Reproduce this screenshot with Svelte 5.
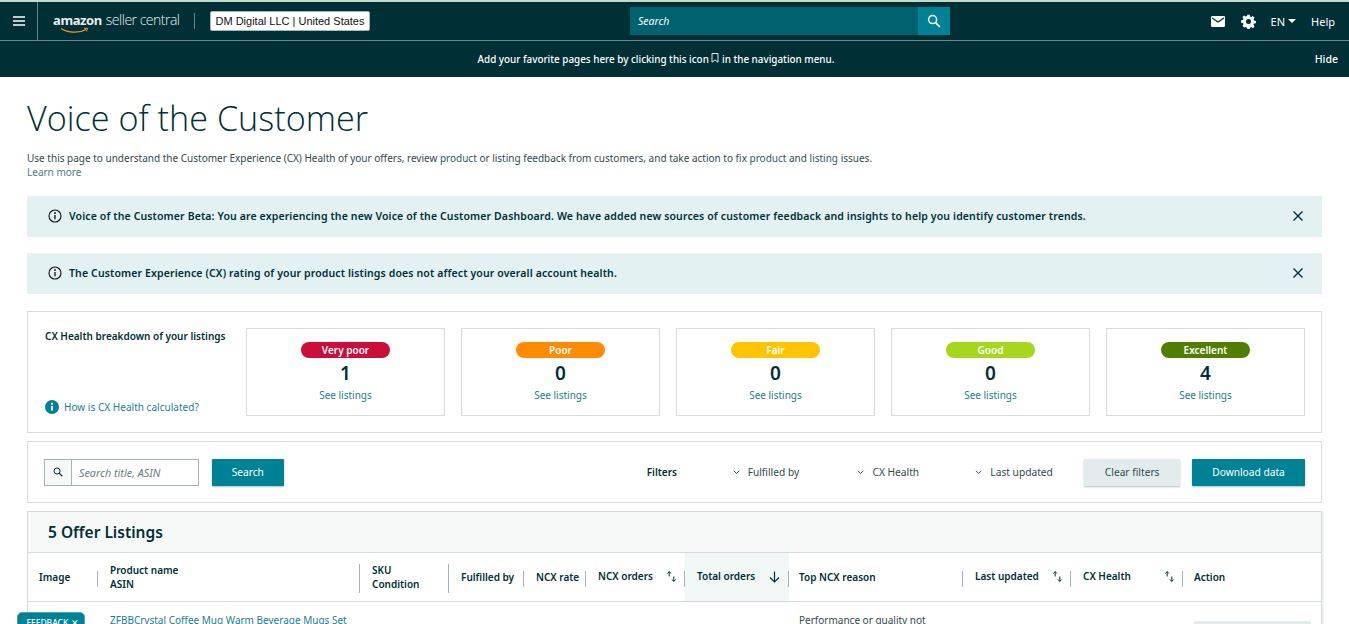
<script>
  const ratings = [
    { label: 'Very poor', count: 1, color: '#cc0c39' },
    { label: 'Poor', count: 0, color: '#ff8c00' },
    { label: 'Fair', count: 0, color: '#ffc400' },
    { label: 'Good', count: 0, color: '#a6d71c' },
    { label: 'Excellent', count: 4, color: '#507f00' }
  ];
  const filters = ['Fulfilled by', 'CX Health', 'Last updated'];
  const alerts = [
    'Voice of the Customer Beta: You are experiencing the new Voice of the Customer Dashboard. We have added new sources of customer feedback and insights to help you identify customer trends.',
    'The Customer Experience (CX) rating of your product listings does not affect your overall account health.'
  ];
  const columns = [
    { lines: ['Image'] },
    { lines: ['Product name', 'ASIN'] },
    { lines: ['SKU', 'Condition'] },
    { lines: ['Fulfilled by'] },
    { lines: ['NCX rate'] },
    { lines: ['NCX orders'], sort: true },
    { lines: ['Total orders'], sorted: true },
    { lines: ['Top NCX reason'] },
    { lines: ['Last updated'], sort: true },
    { lines: ['CX Health'], sort: true },
    { lines: ['Action'] }
  ];
</script>

<div class="page">
  <header class="topbar">
    <div class="nav">
      <button class="menu" aria-label="Menu">
        <svg width="14" height="12" viewBox="0 0 14 12"><path d="M1 2h12M1 6h12M1 10h12" stroke="#fff" stroke-width="1.5" /></svg>
      </button>
      <div class="logo">
        <span class="logo-a">amazon</span><span class="logo-b">seller central</span>
        <svg class="smile" width="30" height="7" viewBox="0 0 30 7"><path d="M1 1.5C8 6 19 6.5 26 2.5" fill="none" stroke="#f29a2e" stroke-width="1.3" /><path d="M24 1.5l3.5-.3-1 3.2" fill="none" stroke="#f29a2e" stroke-width="1" /></svg>
      </div>
      <span class="logo-sep"></span>
      <span class="account">DM Digital LLC | United States</span>
      <div class="search">
        <span class="search-text">Search</span>
        <span class="search-btn">
          <svg width="14" height="14" viewBox="0 0 14 14"><circle cx="5.6" cy="5.6" r="4" fill="none" stroke="#fff" stroke-width="1.5" /><path d="M8.6 8.6l4.200 4.200" stroke="#fff" stroke-width="1.800" /></svg>
        </span>
      </div>
      <div class="nav-right">
        <svg class="mail" width="14" height="11" viewBox="0 0 14 11"><rect width="14" height="11" rx="1.200" fill="#fff" /><path d="M1 2l6 4 6-4" fill="none" stroke="#002f36" stroke-width="1.300" /></svg>
        <svg width="15" height="15" viewBox="0 0 24 24"><path fill="#fff" fill-rule="evenodd" d="M13.900 1l.5 3 2 .9 2.600-1.700 2.700 2.700-1.700 2.600.9 2 3 .5v3.800l-3 .5-.9 2 1.700 2.600-2.700 2.700-2.600-1.700-2 .9-.5 3h-3.800l-.5-3-2-.9L5 21.600l-2.700-2.700L4 16.300l-.9-2-3-.5V10l3-.5.9-2L2.300 4.900 5 2.200l2.600 1.700 2-.9.5-2h3.800zM12 8a4 4 0 1 0 0 8 4 4 0 0 0 0-8z" /></svg>
        <span class="lang">EN<i class="caret"></i></span>
        <span>Help</span>
      </div>
    </div>
    <div class="notice">
      <span class="notice-text">Add your favorite pages here by clicking this icon
        <svg width="8" height="10" viewBox="0 0 8 10"><path d="M1 .5h6v8.700L4 7 1 9.200z" fill="none" stroke="#fff" stroke-width=".9" /></svg>
        in the navigation menu.</span>
      <span class="hide">Hide</span>
    </div>
  </header>

  <main class="content">
    <h1>Voice of the Customer</h1>
    <p class="intro">Use this page to understand the Customer Experience (CX) Health of your offers, review <a href="#top">product</a> or listing feedback from customers, and take action to fix <a href="#top">product</a> and <a href="#top">listing</a> issues.<br /><a href="#top" class="muted">Learn more</a></p>

    {#each alerts as alert}
      <div class="alert">
        <svg width="14" height="14" viewBox="0 0 14 14"><circle cx="7" cy="7" r="6" fill="none" stroke="#0f1111" stroke-width="1.100" /><path d="M7 6v4.200" stroke="#0f1111" stroke-width="1.300" /><circle cx="7" cy="4" r=".9" fill="#0f1111" /></svg>
        <span class="alert-text">{alert}</span>
        <svg class="close" width="12" height="12" viewBox="0 0 12 12"><path d="M1.500 1.500l9 9M10.500 1.500l-9 9" stroke="#002f36" stroke-width="1.400" /></svg>
      </div>
    {/each}

    <section class="panel health">
      <div class="health-side">
        <strong>CX Health breakdown of your listings</strong>
        <a href="#top" class="how">
          <svg width="14" height="14" viewBox="0 0 14 14"><circle cx="7" cy="7" r="7" fill="#008296" /><path d="M7 6v4.500" stroke="#fff" stroke-width="1.800" /><circle cx="7" cy="3.800" r="1.100" fill="#fff" /></svg>
          How is CX Health calculated?
        </a>
      </div>
      <div class="cards">
        {#each ratings as r}
          <div class="card">
            <span class="pill" style="background:{r.color}">{r.label}</span>
            <span class="count">{r.count}</span>
            <a href="#top">See listings</a>
          </div>
        {/each}
      </div>
    </section>

    <section class="panel toolbar">
      <div class="find">
        <span class="find-icon">
          <svg width="10" height="10" viewBox="0 0 14 14"><circle cx="5.600" cy="5.600" r="4.200" fill="none" stroke="#002f36" stroke-width="1.400" /><path d="M8.600 8.600l4.400 4.400" stroke="#002f36" stroke-width="1.700" /></svg>
        </span>
        <span class="find-text">Search title, ASIN</span>
      </div>
      <button class="btn primary search-go">Search</button>
      <strong class="filters-label">Filters</strong>
      {#each filters as f}
        <span class="filter">
          <svg width="7" height="5" viewBox="0 0 7 5"><path d="M.8.800l2.700 2.700L6.200.800" fill="none" stroke="#44565a" stroke-width="1" /></svg>
          {f}
        </span>
      {/each}
      <button class="btn secondary">Clear filters</button>
      <button class="btn primary download">Download data</button>
    </section>

    <section class="table">
      <div class="table-title">5 Offer Listings</div>
      <div class="grid head">
        {#each columns as c, i}
          <div class="th" class:active={c.sorted} class:sortable={c.sort || c.sorted} class:tall={c.lines.length > 1} class:nosep={i === columns.length - 1}>
            <span class="th-label">
              {#each c.lines as l}<span>{l}</span>{/each}
            </span>
            {#if c.sort}
              <svg class="sort" width="9" height="11" viewBox="0 0 9 11"><path d="M2.200 5.500V1M.5 2.500L2.200.5l1.700 2" fill="none" stroke="#002f36" stroke-width="1" /><path d="M6.800 5.500V10M5.100 8.500l1.700 2 1.700-2" fill="none" stroke="#002f36" stroke-width="1" /></svg>
            {/if}
            {#if c.sorted}
              <svg class="sort" width="11" height="12" viewBox="0 0 11 12"><path d="M5.500.5v10.500M1 6.500L5.500 11 10 6.500" fill="none" stroke="#002f36" stroke-width="1.200" /></svg>
            {/if}
          </div>
        {/each}
      </div>
      <div class="grid row">
        <div></div>
        <div class="cell"><a href="#top">ZFBBCrystal Coffee Mug Warm Beverage Mugs Set</a></div>
        <div class="cell sku">V09STXDCHH</div>
        <div></div><div></div><div></div><div></div>
        <div class="cell reason">Performance or quality not</div>
        <div></div><div></div>
        <div class="cell action"><span class="row-btn"></span></div>
      </div>
    </section>
  </main>

  <button class="feedback">FEEDBACK <span>✕</span></button>
</div>

<style>
  :global(html), :global(body) {
    margin: 0;
    height: 624px;
    overflow: hidden;
    background: #fff;
  }
  .page {
    font-family: "Noto Sans", "Open Sans", sans-serif;
    font-size: 10px;
    color: #002f36;
    height: 624px;
    overflow: hidden;
    position: relative;
  }
  a { color: #1c7d90; text-decoration: none; }
  button { font-family: inherit; border: 0; }

  .topbar {
    background: #002f36;
    border-top: 2px solid #c4d9c8;
    color: #fff;
    height: 75px;
  }
  .nav {
    display: flex;
    align-items: center;
    height: 38px;
    border-bottom: 1px solid #6f8486;
  }
  .menu {
    width: 38px;
    height: 38px;
    background: none;
    border-right: 1px solid #6f8486;
    padding: 0;
    display: flex;
    align-items: center;
    justify-content: center;
    box-sizing: border-box;
  }
  .logo {
    position: relative;
    margin-left: 15px;
    width: 128px;
    display: flex;
    align-items: baseline;
    gap: 4px;
    color: #e8eeee;
    white-space: nowrap;
    margin-top: -4px;
  }
  .logo-a { font-weight: 700; font-size: 13px; letter-spacing: -.4px; }
  .logo-b { font-family: "Open Sans", sans-serif; font-weight: 300; font-size: 14px; letter-spacing: -.5px; }
  .smile { position: absolute; left: 7px; top: 17px; }
  .logo-sep { width: 1px; height: 16px; background: #6f8486; margin-left: 13px; }
  .account {
    margin-left: 15px;
    background: #fff;
    color: #0f1111;
    font-family: "Liberation Sans", sans-serif;
    font-size: 11px;
    border-radius: 2px;
    border: 1px solid #aab7b8;
    height: 18px;
    line-height: 18px;
    width: 158px;
    text-align: center;
  }
  .search {
    margin-left: 260px;
    width: 320px;
    height: 28px;
    background: #00626f;
    display: flex;
    align-items: center;
    justify-content: space-between;
  }
  .search-text { font-style: italic; padding-left: 8px; font-size: 10.500px; }
  .search-btn {
    width: 32px;
    height: 28px;
    background: #008296;
    display: flex;
    align-items: center;
    justify-content: center;
  }
  .nav-right {
    margin-left: auto;
    padding-right: 14px;
    display: flex;
    align-items: center;
    gap: 15px;
    font-size: 11px;
  }
  .mail { margin-right: 1px; }
  .lang { display: flex; align-items: center; gap: 3px; }
  .caret { width: 0; height: 0; border: 4px solid transparent; border-top-color: #fff; border-bottom: 0; }
  .notice {
    display: flex;
    align-items: center;
    justify-content: center;
    position: relative;
    height: 36px;
    padding-right: 37px;
    font-size: 9.900px;
    font-weight: 500;
  }
  .hide { position: absolute; right: 11px; font-size: 10.500px; }

  .content { padding: 0 27px; }
  h1 {
    font-family: "Open Sans", sans-serif;
    font-weight: 300;
    font-size: 34.200px;
    line-height: 40px;
    margin: 21px 0 0;
  }
  .intro {
    margin: 13px 0 0;
    font-size: 10px;
    line-height: 14px;
    color: #33494e;
  }
  .intro a { color: #2a5a68; }
  .intro a.muted { color: #4a7a85; }
  .alert {
    background: #e3f1f3;
    margin-top: 16px;
    height: 41px;
    box-sizing: border-box;
    display: flex;
    align-items: center;
    padding: 0 18px 2px 21px;
    gap: 7px;
  }
  .alert:first-of-type { margin-top: 17px; }
  .alert-text { font-weight: 600; font-size: 10.500px; letter-spacing: .13px; }
  .close { margin-left: auto; }

  .panel {
    border: 1px solid #d5dbdb;
    box-sizing: border-box;
  }
  .health {
    margin-top: 17px;
    height: 122px;
    display: flex;
    padding: 16px;
  }
  .health-side {
    width: 202px;
    display: flex;
    flex-direction: column;
    justify-content: space-between;
  }
  .health-side strong { font-weight: 600; margin-top: 1px; margin-left: 1px; }
  .how { display: flex; align-items: center; gap: 5px; margin: 0 0 2px 1px; letter-spacing: .03px; }
  .cards { flex: 1; display: flex; gap: 16px; }
  .card {
    flex: 1;
    border: 1px solid #d5dbdb;
    display: flex;
    flex-direction: column;
    align-items: center;
    padding-top: 13px;
  }
  .pill {
    width: 89px;
    height: 16px;
    line-height: 16px;
    border-radius: 8px;
    color: #fff;
    font-weight: 600;
    text-align: center;
  }
  .count { font-size: 19px; font-weight: 600; line-height: 24px; margin: 3px 0 3px; }

  .toolbar {
    margin-top: 8px;
    height: 62px;
    display: flex;
    align-items: center;
    padding: 0 16px;
    font-size: 10.200px;
  }
  .find {
    width: 155px;
    height: 27px;
    border: 1px solid #a6b3b5;
    box-sizing: border-box;
    display: flex;
  }
  .find-icon {
    width: 26px;
    background: #f7f9f9;
    border-right: 1px solid #a6b3b5;
    display: flex;
    align-items: center;
    justify-content: center;
  }
  .find-text { font-style: italic; color: #6b7c80; line-height: 25px; padding-left: 7px; font-size: 10.800px; }
  .btn {
    height: 27px;
    font-size: 10.200px;
    border-radius: 1px;
    box-shadow: 0 1px 2px rgba(0, 47, 54, .3);
  }
  .primary { background: #008296; color: #fff; }
  .secondary { background: #e3ecec; color: #33494e; width: 96px; }
  .search-go { width: 72px; margin-left: 13px; }
  .download { width: 113px; margin-left: 12px; }
  .filters-label { margin-left: 363px; font-weight: 600; width: 86px; font-size: 10px; }
  .filter {
    display: flex;
    align-items: center;
    gap: 8px;
    color: #33494e;
    white-space: nowrap;
  }
  .filter:nth-of-type(1) { width: 125px; }
  .filter:nth-of-type(2) { width: 118px; }
  .filter:nth-of-type(3) { width: 109px; }

  .table {
    margin-top: 8px;
    border: 1px solid #d5dbdb;
    box-shadow: 1px 1px 2px rgba(0, 47, 54, .12);
  }
  .table-title {
    background: #f7f8f8;
    height: 40px;
    line-height: 40px;
    padding-left: 20px;
    font-size: 15.500px;
    font-weight: 600;
    border-bottom: 1px solid #d5dbdb;
  }
  .grid {
    display: grid;
    grid-template-columns: 70px 262px 89px 75px 62px 99px 104px 174px 108px 112px 1fr;
  }
  .head {
    height: 48px;
    border-bottom: 1px solid #d5dbdb;
    font-weight: 600;
  }
  .th {
    display: flex;
    align-items: center;
    padding: 0 0 0 12px;
    position: relative;
    white-space: nowrap;
  }
  .th.sortable { padding-bottom: 2px; }
  .th:first-child, .th:last-child { padding-left: 11px; }
  .th:nth-child(8) { padding-left: 10px; }
  .th::after {
    content: '';
    position: absolute;
    right: 0;
    top: 18px;
    bottom: 14px;
    width: 1px;
    background: #a6b3b5;
  }
  .th.tall::after { top: 11px; bottom: 8px; }
  .th.nosep::after { display: none; }
  .th.active { background: #f1f6f6; }
  .th-label { display: flex; flex-direction: column; line-height: 14px; }
  .sort { position: absolute; right: 9px; top: 18px; }
  .row { height: 60px; }
  .cell { padding: 11px 0 0 12px; line-height: 14px; color: #33494e; }
  .sku { padding-top: 19px; }
  .reason { padding-left: 10px; }
  .action { padding-left: 11px; }
  .row-btn { display: block; width: 117px; height: 30px; background: #e3ecec; border-radius: 2px; margin-top: 8px; }
  .feedback {
    position: absolute;
    left: 17px;
    top: 612px;
    width: 68px;
    height: 22px;
    background: #008296;
    border: 1px solid #4fa3b0;
    color: #fff;
    font-size: 8.500px;
    font-weight: 500;
    border-radius: 5px 5px 0 0;
    text-align: center;
    padding: 0 0 0 3px;
    line-height: 20px;
  }
</style>
